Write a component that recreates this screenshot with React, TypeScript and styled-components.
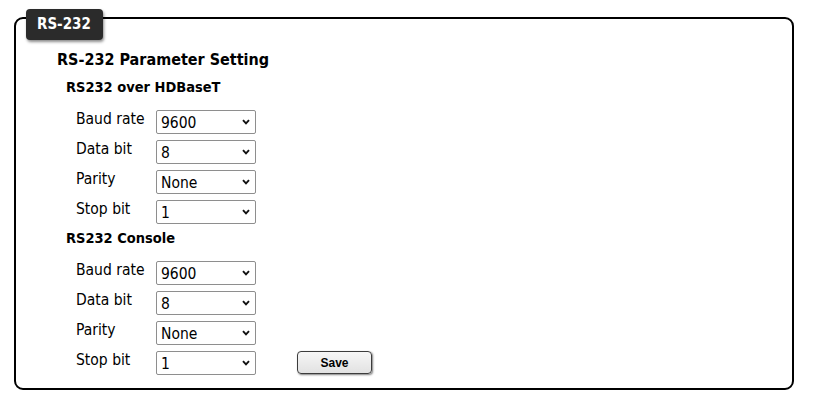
import React from 'react';
import styled, { createGlobalStyle } from 'styled-components';

const GlobalStyle = createGlobalStyle`
  body {
    margin: 0;
    background: #fff;
    font-family: 'DejaVu Sans Condensed', 'DejaVu Sans', sans-serif;
    color: #000;
  }
`;

const Page = styled.div`
  padding: 17px 22px 13px 14px;
`;

const Panel = styled.section`
  position: relative;
  height: 369px;
  border: 2px solid #000;
  border-radius: 9px;
  padding: 0 0 0 41px;
`;

const Tab = styled.div`
  position: absolute;
  left: 10px;
  top: -10px;
  width: 77px;
  height: 31px;
  box-sizing: border-box;
  padding-left: 11px;
  background: #2b2b2b;
  border-radius: 4px;
  box-shadow: 1px 2px 3px rgba(0, 0, 0, 0.45);
  color: #fff;
  font-size: 15px;
  font-weight: bold;
  line-height: 31px;
`;

const Title = styled.h2`
  margin: 0;
  padding-top: 30px;
  font-size: 16px;
  line-height: 22px;
  font-weight: bold;
`;

const GroupTitle = styled.h3<{ $top: number }>`
  margin: ${(p) => p.$top}px 0 0 9px;
  font-size: 14.5px;
  line-height: 20px;
  font-weight: bold;
`;

const Form = styled.div`
  display: grid;
  grid-template-columns: 80px 100px auto;
  grid-auto-rows: 24px;
  row-gap: 6px;
  margin: 13px 0 0 19px;
  align-items: start;
`;

const Label = styled.span`
  font-size: 15.5px;
  line-height: 18px;
`;

const SelectBox = styled.div`
  position: relative;
  width: 100px;
  height: 24px;
`;

const Select = styled.select`
  appearance: none;
  -webkit-appearance: none;
  width: 100%;
  height: 100%;
  box-sizing: border-box;
  margin: 0;
  padding: 2px 0 0 4px;
  border: 1px solid #8e8e8e;
  border-radius: 2px;
  background: #fff;
  font-family: inherit;
  font-size: 15.5px;
  color: #000;
`;

const Chevron = styled.svg`
  position: absolute;
  right: 6px;
  top: 9px;
  width: 8px;
  height: 6px;
  pointer-events: none;
`;

const SaveButton = styled.button`
  margin-left: 41px;
  width: 75px;
  height: 23px;
  border: 1px solid #3c3c3c;
  border-radius: 4px;
  background: linear-gradient(#f6f6f6, #e2e2e2);
  box-shadow: 1px 1px 2px rgba(0, 0, 0, 0.5);
  font-family: 'Liberation Sans', Arial, sans-serif;
  font-size: 12px;
  font-weight: bold;
  color: #000;
  padding: 0;
`;

type Field = { label: string; value: string; options: string[] };

const fields: Field[] = [
  { label: 'Baud rate', value: '9600', options: ['1200', '2400', '4800', '9600', '19200', '38400', '57600', '115200'] },
  { label: 'Data bit', value: '8', options: ['7', '8'] },
  { label: 'Parity', value: 'None', options: ['None', 'Odd', 'Even'] },
  { label: 'Stop bit', value: '1', options: ['1', '2'] },
];

const Dropdown = ({ value, options }: { value: string; options: string[] }) => (
  <SelectBox>
    <Select defaultValue={value}>
      {options.map((o) => (
        <option key={o}>{o}</option>
      ))}
    </Select>
    <Chevron viewBox="0 0 8 6">
      <path d="M1 1.2 L4 4.4 L7 1.2" fill="none" stroke="#111" strokeWidth="1.9" />
    </Chevron>
  </SelectBox>
);

const Group = ({ withSave }: { withSave?: boolean }) => (
  <Form>
    {fields.map((f, i) => (
      <React.Fragment key={f.label}>
        <Label>{f.label}</Label>
        <Dropdown value={f.value} options={f.options} />
        {withSave && i === fields.length - 1 ? <SaveButton>Save</SaveButton> : <span />}
      </React.Fragment>
    ))}
  </Form>
);

export default function App() {
  return (
    <Page>
      <GlobalStyle />
      <Panel>
        <Tab>RS-232</Tab>
        <Title>RS-232 Parameter Setting</Title>
        <GroupTitle $top={6}>RS232 over HDBaseT</GroupTitle>
        <Group />
        <GroupTitle $top={4}>RS232 Console</GroupTitle>
        <Group withSave />
      </Panel>
    </Page>
  );
}
